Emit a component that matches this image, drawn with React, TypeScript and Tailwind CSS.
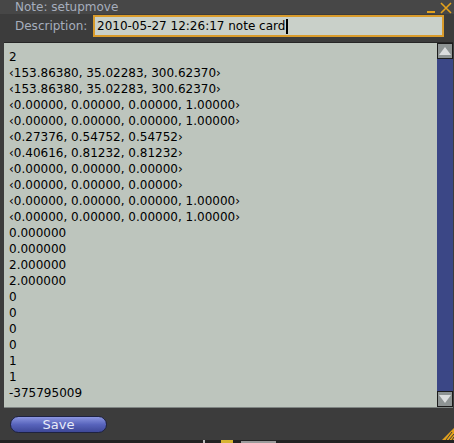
const lines = [
  "2",
  "‹153.86380, 35.02283, 300.62370›",
  "‹153.86380, 35.02283, 300.62370›",
  "‹0.00000, 0.00000, 0.00000, 1.00000›",
  "‹0.00000, 0.00000, 0.00000, 1.00000›",
  "‹0.27376, 0.54752, 0.54752›",
  "‹0.40616, 0.81232, 0.81232›",
  "‹0.00000, 0.00000, 0.00000›",
  "‹0.00000, 0.00000, 0.00000›",
  "‹0.00000, 0.00000, 0.00000, 1.00000›",
  "‹0.00000, 0.00000, 0.00000, 1.00000›",
  "0.000000",
  "0.000000",
  "2.000000",
  "2.000000",
  "0",
  "0",
  "0",
  "0",
  "1",
  "1",
  "-375795009",
];

function ScrollButton({ dir }: { dir: "up" | "down" }) {
  return (
    <div className="flex h-[16px] w-[16px] items-center justify-center border border-[#1c1c1c] bg-[#8e9494]">
      <svg width="12" height="8" viewBox="0 0 12 8">
        {dir === "up" ? (
          <polygon points="6,0 12,8 0,8" fill="#dcdedf" />
        ) : (
          <polygon points="0,0 12,0 6,8" fill="#dcdedf" />
        )}
      </svg>
    </div>
  );
}

export default function App() {
  return (
    <div className="flex h-[443px] w-[454px] flex-col overflow-hidden bg-[#3c3c3c] font-['DejaVu_Sans',sans-serif]">
      {/* title bar */}
      <div className="flex h-[14px] items-center justify-between bg-[#474747] pl-[15px] pr-[2px]">
        <span className="text-[12px] leading-none text-[#a6aebd]">Note: setupmove</span>
        <div className="flex items-center gap-[5px]">
          <div className="mt-[9px] h-[2px] w-[8px] bg-[#e3a11c]" />
          <svg className="mt-[2px]" width="12" height="12" viewBox="0 0 12 12">
            <path d="M1 1 L11 11 M11 1 L1 11" stroke="#e3a11c" strokeWidth="1.6" />
          </svg>
        </div>
      </div>

      {/* description row */}
      <div className="flex h-[28px] items-start pl-[15px] pr-[10px]">
        <span className="mt-[4px] w-[78px] text-[12px] leading-[16px] text-[#a6aebd]">Description:</span>
        <div className="mt-[1px] flex h-[22px] flex-1 items-center border-2 border-[#d99b2b] bg-[#c9d0c9] pl-[2px]">
          <span className="text-[12px] leading-none text-black">2010-05-27 12:26:17 note card</span>
          <span className="ml-[1px] h-[15px] w-[2px] bg-black" />
        </div>
      </div>

      {/* note body */}
      <div className="ml-[4px] mr-[1px] flex h-[366px] border-t border-[#262626] border-b border-b-[#7e8482] bg-[#bdc5bd]">
        <div className="flex-1 overflow-hidden pl-[5px] pt-[6px]">
          {lines.map((line, i) => (
            <div key={i} className="h-[16px] whitespace-nowrap text-[12px] leading-[16px] text-black">
              {line}
            </div>
          ))}
        </div>
        <div className="flex w-[16px] flex-col">
          <ScrollButton dir="up" />
          <div className="flex-1 bg-[#3b4786]" />
          <ScrollButton dir="down" />
        </div>
      </div>

      {/* footer */}
      <div className="relative flex h-[32px] items-center pl-[10px]">
        <button className="flex h-[17px] w-[97px] items-center justify-center rounded-full border border-[#1e2240] bg-gradient-to-b from-[#8c96e0] via-[#5864bc] to-[#3e4898] text-[13px] leading-none text-[#e8ecf8]">
          Save
        </button>
        <svg className="absolute bottom-0 right-0" width="14" height="12" viewBox="0 0 14 12">
          <path d="M14 0 L14 12 L2 12 Z" fill="#e3a11c" />
          <path d="M12 4 L6 12 M14 6 L9 12 M14 9 L12 12" stroke="#3c3c3c" strokeWidth="1" />
        </svg>
      </div>

      {/* desktop behind the window */}
      <div className="flex h-[3px] items-end bg-[#222]">
        <div className="ml-[203px] h-[3px] w-[2px] bg-[#bbb]" />
        <div className="ml-[16px] h-[3px] w-[12px] bg-[#d6b432]" />
        <div className="ml-[8px] h-[2px] w-[35px] bg-[#9a9a9a]" />
      </div>
    </div>
  );
}
